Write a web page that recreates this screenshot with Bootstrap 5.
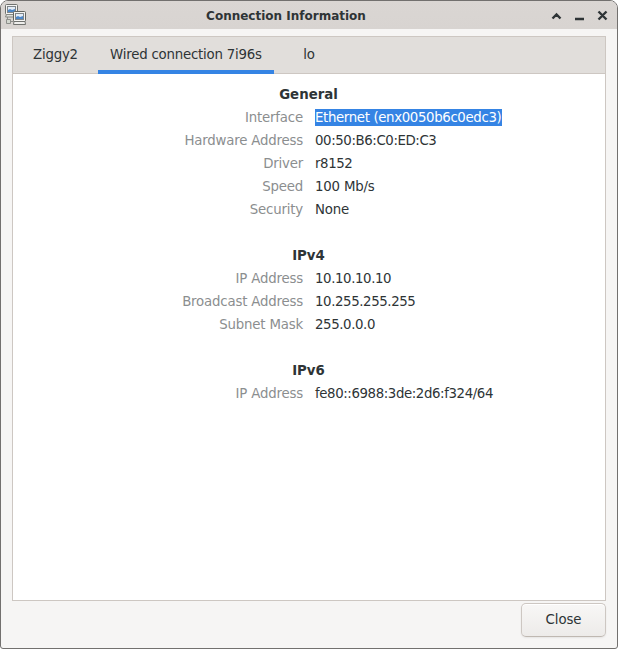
<!DOCTYPE html>
<html lang="en">
<head>
<meta charset="utf-8">
<title>Connection Information</title>
<link href="https://cdn.jsdelivr.net/npm/bootstrap@5.3.0/dist/css/bootstrap.min.css" rel="stylesheet">
<style>
body{font-family:"DejaVu Sans",sans-serif;font-size:13.333px;line-height:23px;color:#2e3436;background:#fff}
.window{width:618px;height:649px;border:1px solid #72706e;border-radius:8px 8px 3px 3px;background:#f6f5f4}
.titlebar{height:28px;background:linear-gradient(#dad6d3,#d8d4d1)}
.titlebar h1{font-size:12px;font-weight:700;line-height:28px;padding:1px 6px 0 0}
.app-icon{width:30px;height:28px}
.controls{width:62px;height:28px}
.notebook{margin:7px 11px 0;height:565px;border:1px solid #cdc7c2;background:#fff}
.tabstrip{height:37px;background:#e1dedb;border-bottom:1px solid #cdc7c2;padding-left:8px}
.tabstrip .nav-link{height:37px;padding:0 12px;line-height:35px;color:#2e3436;border-radius:0;white-space:nowrap;letter-spacing:-.21px}
.tabstrip .nav-link.active{border-bottom:4px solid #3584e4}
.t1,.t2,.t3{flex:none}
.t1{width:77px}.t2{width:176px}.t3{width:70px}
.details{padding-top:9px}
.details h2{font-size:13.333px;font-weight:700;line-height:23px;margin:0;padding-right:1px}
.details dl{margin:0 0 23px}
.details dt{width:290px;font-weight:400;color:#8b8e8f;text-align:right;letter-spacing:-.19px}
.details dd{margin:0 0 0 12px;letter-spacing:-.2px}
.details .hw-value{letter-spacing:-.4px}
.selected-text{background:#3584e4;color:#fff;line-height:17px;height:17px;width:187px;margin-top:3px;display:block;white-space:nowrap;letter-spacing:-.36px}
.close-btn{width:85px;height:34px;margin:2px 11px 0 0;padding:0 0 1px;font-size:13.333px;line-height:30px;letter-spacing:-.1px;color:#2e3436;border:1px solid #cdc7c2;border-bottom-color:#bfb8b1;border-radius:5px;background:linear-gradient(#f8f7f6,#edebe9);box-shadow:inset 0 1px #fff,0 1px 2px rgba(0,0,0,.07)}
</style>
</head>
<body>
<main class="window d-flex flex-column overflow-hidden">
  <header class="titlebar d-flex align-items-center flex-shrink-0">
    <svg class="app-icon flex-shrink-0" viewBox="1 1 30 28" aria-hidden="true">
      <path d="M7.500 17v2.500M6.500 19.500h4v4h-4zM10.500 21.500h3" fill="#d3d7cf" stroke="#8d8f8b"/>
      <rect x="5.500" y="4.500" width="12" height="10" rx="1" fill="#f4f4f2" stroke="#70726f"/>
      <path d="M7 6h9v7H7z" fill="#80868b"/>
      <path d="M8 7h7v5H8z" fill="#e4edf7"/>
      <path d="M8 10l2-1 2 1 3-1v3H8z" fill="#4c87c8"/>
      <path d="M6.500 14.500h10l1 2.500h-12z" fill="#dcdeda" stroke="#858783"/>
      <rect x="13.500" y="11.500" width="12" height="10" rx="1" fill="#f4f4f2" stroke="#62645f"/>
      <path d="M15 13h9v7h-9z" fill="#80868b"/>
      <path d="M16 14h7v5h-7z" fill="#e4edf7"/>
      <path d="M16 17l2-1 2 1 3-1v3h-7z" fill="#4c87c8"/>
      <path d="M14 21.500h11l.5 3h-12z" fill="#eeeeec" stroke="#70726f"/>
    </svg>
    <h1 class="flex-grow-1 text-center m-0">Connection Information</h1>
    <svg class="controls flex-shrink-0" viewBox="547 1 62 28" fill="none" stroke="#2e3436" stroke-width="2.400" role="img" aria-label="Window controls">
      <path d="M552.500 18.500l4-4 4 4M575 19h9M598.500 11.500l8 8m0-8l-8 8"/>
    </svg>
    <span class="pe-2"></span>
  </header>
  <section class="notebook flex-shrink-0">
    <ul class="tabstrip nav flex-nowrap">
      <li class="nav-item t1"><a class="nav-link">Ziggy2</a></li>
      <li class="nav-item t2"><a class="nav-link active">Wired connection 7i96s</a></li>
      <li class="nav-item t3 text-center"><a class="nav-link">lo</a></li>
    </ul>
    <div class="details">
      <h2 class="text-center">General</h2>
      <dl>
        <div class="d-flex"><dt>Interface</dt><dd><span class="selected-text">Ethernet (enx0050b6c0edc3)</span></dd></div>
        <div class="d-flex"><dt>Hardware Address</dt><dd class="hw-value">00:50:B6:C0:ED:C3</dd></div>
        <div class="d-flex"><dt>Driver</dt><dd class="hw-value">r8152</dd></div>
        <div class="d-flex"><dt>Speed</dt><dd>100 Mb/s</dd></div>
        <div class="d-flex"><dt>Security</dt><dd>None</dd></div>
      </dl>
      <h2 class="text-center">IPv4</h2>
      <dl>
        <div class="d-flex"><dt>IP Address</dt><dd class="hw-value">10.10.10.10</dd></div>
        <div class="d-flex"><dt>Broadcast Address</dt><dd class="hw-value">10.255.255.255</dd></div>
        <div class="d-flex"><dt>Subnet Mask</dt><dd class="hw-value">255.0.0.0</dd></div>
      </dl>
      <h2 class="text-center">IPv6</h2>
      <dl>
        <div class="d-flex"><dt>IP Address</dt><dd class="hw-value">fe80::6988:3de:2d6:f324/64</dd></div>
      </dl>
    </div>
  </section>
  <footer class="d-flex justify-content-end">
    <button type="button" class="btn close-btn">Close</button>
  </footer>
</main>
<script src="https://cdn.jsdelivr.net/npm/bootstrap@5.3.0/dist/js/bootstrap.bundle.min.js"></script>
</body>
</html>
